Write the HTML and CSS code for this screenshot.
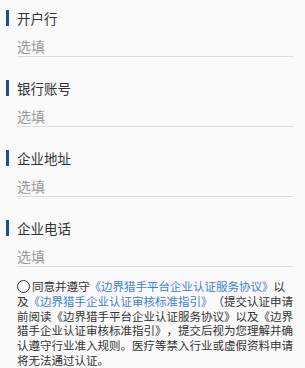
FILE: index.html
```html
<!DOCTYPE html>
<html lang="zh-CN">
<head>
<meta charset="utf-8">
<link rel="stylesheet" href="styles.css">
</head>
<body>
<div class="form">
  <div class="field">
    <div class="label"><span class="bar"></span>开户行</div>
    <div class="input">选填</div>
  </div>
  <div class="field">
    <div class="label"><span class="bar"></span>银行账号</div>
    <div class="input">选填</div>
  </div>
  <div class="field">
    <div class="label"><span class="bar"></span>企业地址</div>
    <div class="input">选填</div>
  </div>
  <div class="field">
    <div class="label"><span class="bar"></span>企业电话</div>
    <div class="input">选填</div>
  </div>
  <p class="agree"><span class="radio"></span>同意并遵守<span class="link">《边界猎手平台企业认证服务协议》</span>以及<span class="link">《边界猎手企业认证审核标准指引》</span>（提交认证申请前阅读《边界猎手平台企业认证服务协议》以及《边界猎手企业认证审核标准指引》，提交后视为您理解并确认遵守行业准入规则。医疗等禁入行业或虚假资料申请将无法通过认证。</p>
</div>
</body>
</html>
```
FILE: styles.css
```css
html, body {
  margin: 0;
  padding: 0;
  background: #fafafa;
}
body {
  font-family: "Noto Sans CJK SC", "Noto Sans", sans-serif;
  color: #333;
  text-spacing-trim: space-all;
}
.form {
  display: flex;
  flex-direction: column;
}
.field {
  padding-left: 6px;
  padding-top: 10px;
}
.field + .field {
  margin-top: 13px;
}
.label {
  display: flex;
  align-items: center;
  height: 16px;
  font-size: 13.5px;
  line-height: 16px;
  color: #333;
}
.bar {
  width: 2.5px;
  height: 16px;
  background: #1d4e94;
  margin-right: 8.5px;
}
.input {
  margin: 10px 12px 0 11px;
  height: 20px;
  line-height: 20px;
  font-size: 14px;
  color: #9a9a9a;
  border-bottom: 1px solid #dcdcdc;
}
.agree {
  margin: 12px 12px 0 17px;
  font-size: 11.5px;
  line-height: 14.8px;
  color: #333;
  text-spacing-trim: space-all;
  font-feature-settings: "halt" 0, "palt" 0;
}
.radio {
  display: inline-block;
  width: 11px;
  height: 11px;
  border: 1.3px solid #333;
  border-radius: 50%;
  vertical-align: -2px;
  margin-right: 2px;
}
.link {
  color: #3f80d6;
}
```
